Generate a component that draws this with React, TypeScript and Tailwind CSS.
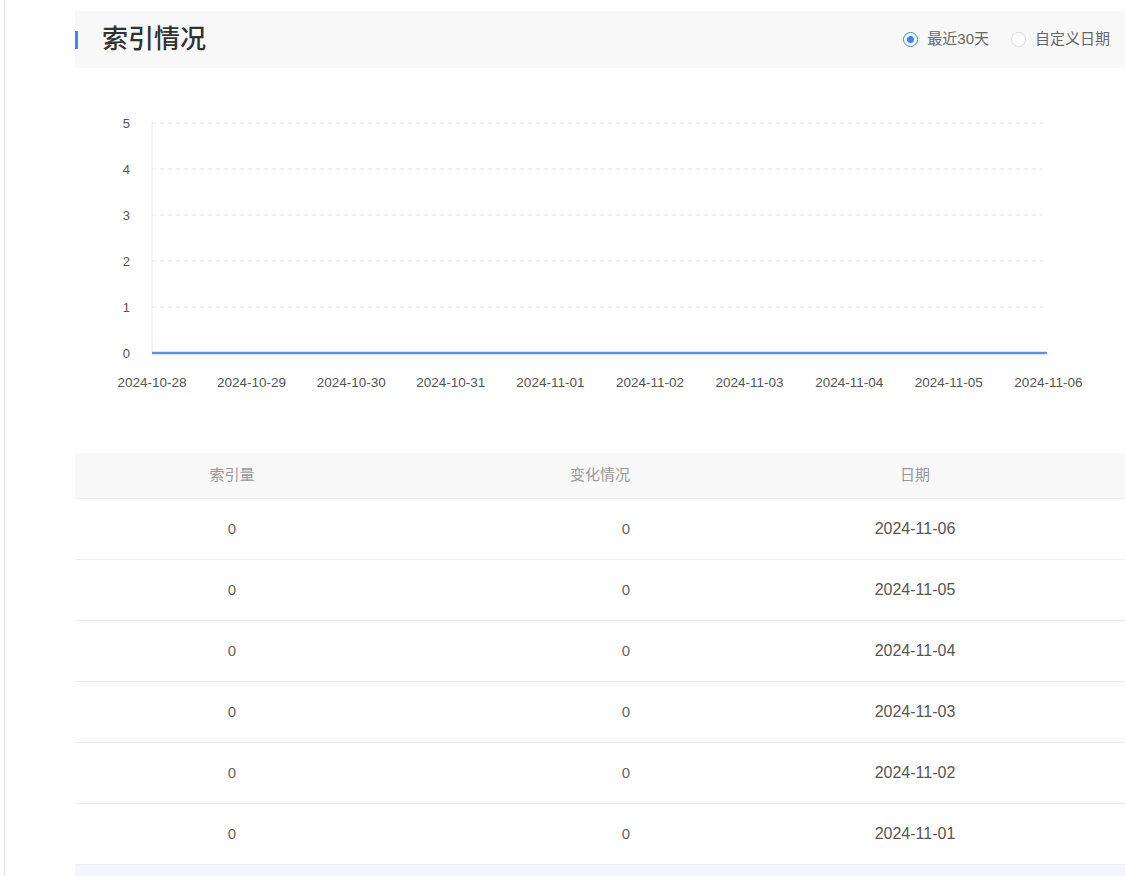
const FONT = { fontFamily: '"Helvetica Neue", Arial, "Liberation Sans", "Noto Sans CJK SC", sans-serif' };

const yTicks = [5, 4, 3, 2, 1, 0];
const dates = [
  '2024-10-28',
  '2024-10-29',
  '2024-10-30',
  '2024-10-31',
  '2024-11-01',
  '2024-11-02',
  '2024-11-03',
  '2024-11-04',
  '2024-11-05',
  '2024-11-06',
];

const rows = [
  { count: 0, change: 0, date: '2024-11-06' },
  { count: 0, change: 0, date: '2024-11-05' },
  { count: 0, change: 0, date: '2024-11-04' },
  { count: 0, change: 0, date: '2024-11-03' },
  { count: 0, change: 0, date: '2024-11-02' },
  { count: 0, change: 0, date: '2024-11-01' },
];

function Radio({ checked, label }: { checked?: boolean; label: string }) {
  return (
    <label className="flex items-center gap-[9px] cursor-pointer">
      <span
        className={`flex h-[15px] w-[15px] items-center justify-center rounded-full border ${
          checked ? 'border-[#3b82f6]' : 'border-[#d9d9d9]'
        } bg-white`}
      >
        {checked && <span className="h-[7px] w-[7px] rounded-full bg-[#3b82f6]" />}
      </span>
      <span className="text-[15px] text-[#666]">{label}</span>
    </label>
  );
}

function Chart() {
  const left = 77;
  const right = 968;
  const top = 55;
  const step = 46;
  const xStep = 99.6;
  return (
    <svg width={1050} height={385} className="block">
      {yTicks.map((t, i) => {
        const y = top + i * step;
        return (
          <g key={t}>
            <text x={55} y={y + 5} textAnchor="end" fontSize={13} fill="#555" style={FONT}>
              {t}
            </text>
            {t !== 0 && (
              <line x1={left} x2={right} y1={y} y2={y} stroke="#e3e3e3" strokeDasharray="4 4" />
            )}
          </g>
        );
      })}
      <line x1={left} x2={left} y1={top} y2={top + 5 * step} stroke="#eaeaea" />
      <line x1={left} x2={972} y1={top + 5 * step} y2={top + 5 * step} stroke="#5b8ff0" strokeWidth={2.5} />
      {dates.map((d, i) => (
        <text
          key={d}
          x={left + i * xStep}
          y={319}
          textAnchor="middle"
          fontSize={13.5}
          fill="#555"
          style={FONT}
        >
          {d}
        </text>
      ))}
    </svg>
  );
}

export default function App() {
  return (
    <div className="h-[876px] w-[1125px] overflow-hidden bg-white" style={FONT}>
      <div className="ml-[4px] flex h-full border-l border-[#e8e8e8] pl-[70px]">
        <div className="w-[1050px] shrink-0">
          {/* Header */}
          <div className="mt-[11px] flex h-[57px] items-center justify-between bg-[#f8f8f8] pr-[15px]">
            <div className="flex items-center">
              <span className="h-[18px] w-[3px] bg-[#4a86f0]" />
              <h1 className="ml-[24px] text-[26px] font-medium text-[#333]">索引情况</h1>
            </div>
            <div className="flex items-center gap-[22px]">
              <Radio checked label="最近30天" />
              <Radio label="自定义日期" />
            </div>
          </div>

          {/* Chart */}
          <Chart />

          {/* Table */}
          <div className="text-[15px]">
            <div className="grid h-[46px] grid-cols-[314px_422px_208px_1fr] items-center border-b border-[#eee] bg-[#f8f8f8] text-[#999]">
              <div className="text-center">索引量</div>
              <div className="text-center">变化情况</div>
              <div className="text-center">日期</div>
              <div />
            </div>
            {rows.map((r) => (
              <div
                key={r.date}
                className="grid h-[61px] grid-cols-[314px_422px_208px_1fr] items-center border-b border-[#eee]"
              >
                <div className="text-center text-[#666]">{r.count}</div>
                <div className="pl-[52px] text-center text-[#666]">{r.change}</div>
                <div className="text-center text-[16px] text-[#555]">{r.date}</div>
                <div />
              </div>
            ))}
            <div className="h-[61px] bg-[#f1f5fd]" />
          </div>
        </div>
      </div>
    </div>
  );
}
